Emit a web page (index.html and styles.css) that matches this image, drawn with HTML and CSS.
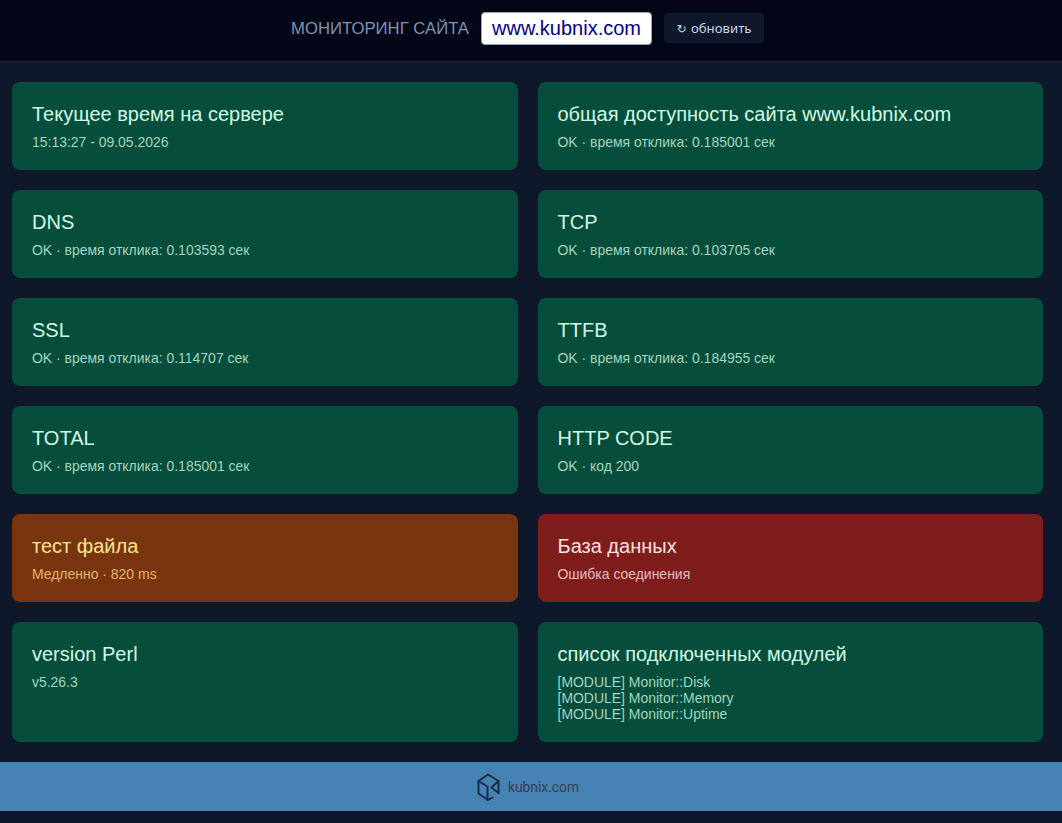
FILE: index.html
```html
<!DOCTYPE html>
<html lang="en">
<head>
  <meta charset="UTF-8">
  <meta name="viewport" content="width=device-width, initial-scale=1.0">
  <title>Мониторинг сайта</title>
  <link rel="stylesheet" href="styles.css">
</head>
<body>
  <header class="topbar">
    <span class="topbar-title">МОНИТОРИНГ САЙТА</span>
    <span class="site-box">www.kubnix.com</span>
    <button class="refresh-btn"><span class="refresh-icon">↻</span> обновить</button>
  </header>
  <main class="grid">
    <div class="card">
      <div class="card-title">Текущее время на сервере</div>
      <div class="card-text">15:13:27 - 09.05.2026</div>
    </div>
    <div class="card">
      <div class="card-title">общая доступность сайта www.kubnix.com</div>
      <div class="card-text">OK · время отклика: 0.185001 сек</div>
    </div>
    <div class="card">
      <div class="card-title">DNS</div>
      <div class="card-text">OK · время отклика: 0.103593 сек</div>
    </div>
    <div class="card">
      <div class="card-title">TCP</div>
      <div class="card-text">OK · время отклика: 0.103705 сек</div>
    </div>
    <div class="card">
      <div class="card-title">SSL</div>
      <div class="card-text">OK · время отклика: 0.114707 сек</div>
    </div>
    <div class="card">
      <div class="card-title">TTFB</div>
      <div class="card-text">OK · время отклика: 0.184955 сек</div>
    </div>
    <div class="card">
      <div class="card-title">TOTAL</div>
      <div class="card-text">OK · время отклика: 0.185001 сек</div>
    </div>
    <div class="card">
      <div class="card-title">HTTP CODE</div>
      <div class="card-text">OK · код 200</div>
    </div>
    <div class="card card-warn">
      <div class="card-title">тест файла</div>
      <div class="card-text">Медленно · 820 ms</div>
    </div>
    <div class="card card-error">
      <div class="card-title">База данных</div>
      <div class="card-text">Ошибка соединения</div>
    </div>
    <div class="card">
      <div class="card-title">version Perl</div>
      <div class="card-text">v5.26.3</div>
    </div>
    <div class="card">
      <div class="card-title">список подключенных модулей</div>
      <div class="card-text">[MODULE] Monitor::Disk<br>[MODULE] Monitor::Memory<br>[MODULE] Monitor::Uptime</div>
    </div>
  </main>
  <footer class="footer">
    <svg class="footer-logo" viewBox="0 0 23 28" width="23" height="28" fill="none" stroke="#1b2d44" stroke-width="2" stroke-linejoin="round" stroke-linecap="round">
      <path d="M15.5 24.5 L11 27 L1.5 20.5 V8 L11 1.5 L21.5 8 V20"/>
      <path d="M1.5 8 L10.5 13.5 V27"/>
      <path d="M21.5 8 L14.5 14.5 L21.5 20"/>
    </svg>
    <span class="footer-text">kubnix.com</span>
  </footer>
</body>
</html>
```

FILE: styles.css
```css
/* General Styles */
body {
  margin: 0;
  font-family: "Liberation Sans", Arial, sans-serif;
  background-color: #0f172a;
  color: #d1fae5;
}

/* Header */
.topbar {
  padding: 12px 7px 16px 0;
  display: flex;
  align-items: center;
  justify-content: center;
  gap: 12px;
  background-color: #020617;
  border-bottom: 1px solid #1e293b;
}

.topbar-title {
  width: 178px;
  font-size: 16.72px;
  white-space: nowrap;
  color: #7f93b2;
}

.site-box {
  padding: 4px 10px;
  font-size: 20px;
  line-height: 23px;
  color: #00008b;
  background-color: #fff;
  border: 1px solid #94a3b8;
  border-radius: 4px;
}

.refresh-btn {
  width: 100px;
  height: 30px;
  padding: 0;
  margin-bottom: 1px;
  font-family: "Noto Sans", sans-serif;
  font-size: 13.2px;
  color: #cbd5e1;
  background-color: #0f172a;
  border: none;
  border-radius: 4px;
}

.refresh-icon {
  margin-right: 1px;
  font-family: "DejaVu Sans", sans-serif;
  font-size: 12px;
}

/* Cards */
.grid {
  display: grid;
  grid-template-columns: 1fr 1fr;
  gap: 20px;
  padding: 20px 19px 20px 12px;
}

.card {
  padding: 20px;
  min-height: 48px;
  border-radius: 8px;
  background-color: #064e3b;
}

.card-title {
  font-size: 20px;
  line-height: 24px;
  margin-bottom: 8px;
}

.card-text {
  font-size: 13.96px;
  line-height: 16px;
  color: #a3d5bf;
}

.card-warn {
  background-color: #78350f;
}

.card-warn .card-title {
  color: #fde68a;
}

.card-warn .card-text {
  color: #e5b567;
}

.card-error {
  background-color: #7f1d1d;
}

.card-error .card-title {
  color: #fee2e2;
}

.card-error .card-text {
  color: #e5bdbd;
}

/* Footer */
.footer {
  height: 49px;
  padding-right: 7px;
  margin-bottom: 12px;
  display: flex;
  align-items: center;
  justify-content: center;
  gap: 8px;
  background-color: #4682b4;
}

.footer-text {
  width: 70px;
  font-family: Roboto, sans-serif;
  font-size: 13.8px;
  color: #374151;
}
```
